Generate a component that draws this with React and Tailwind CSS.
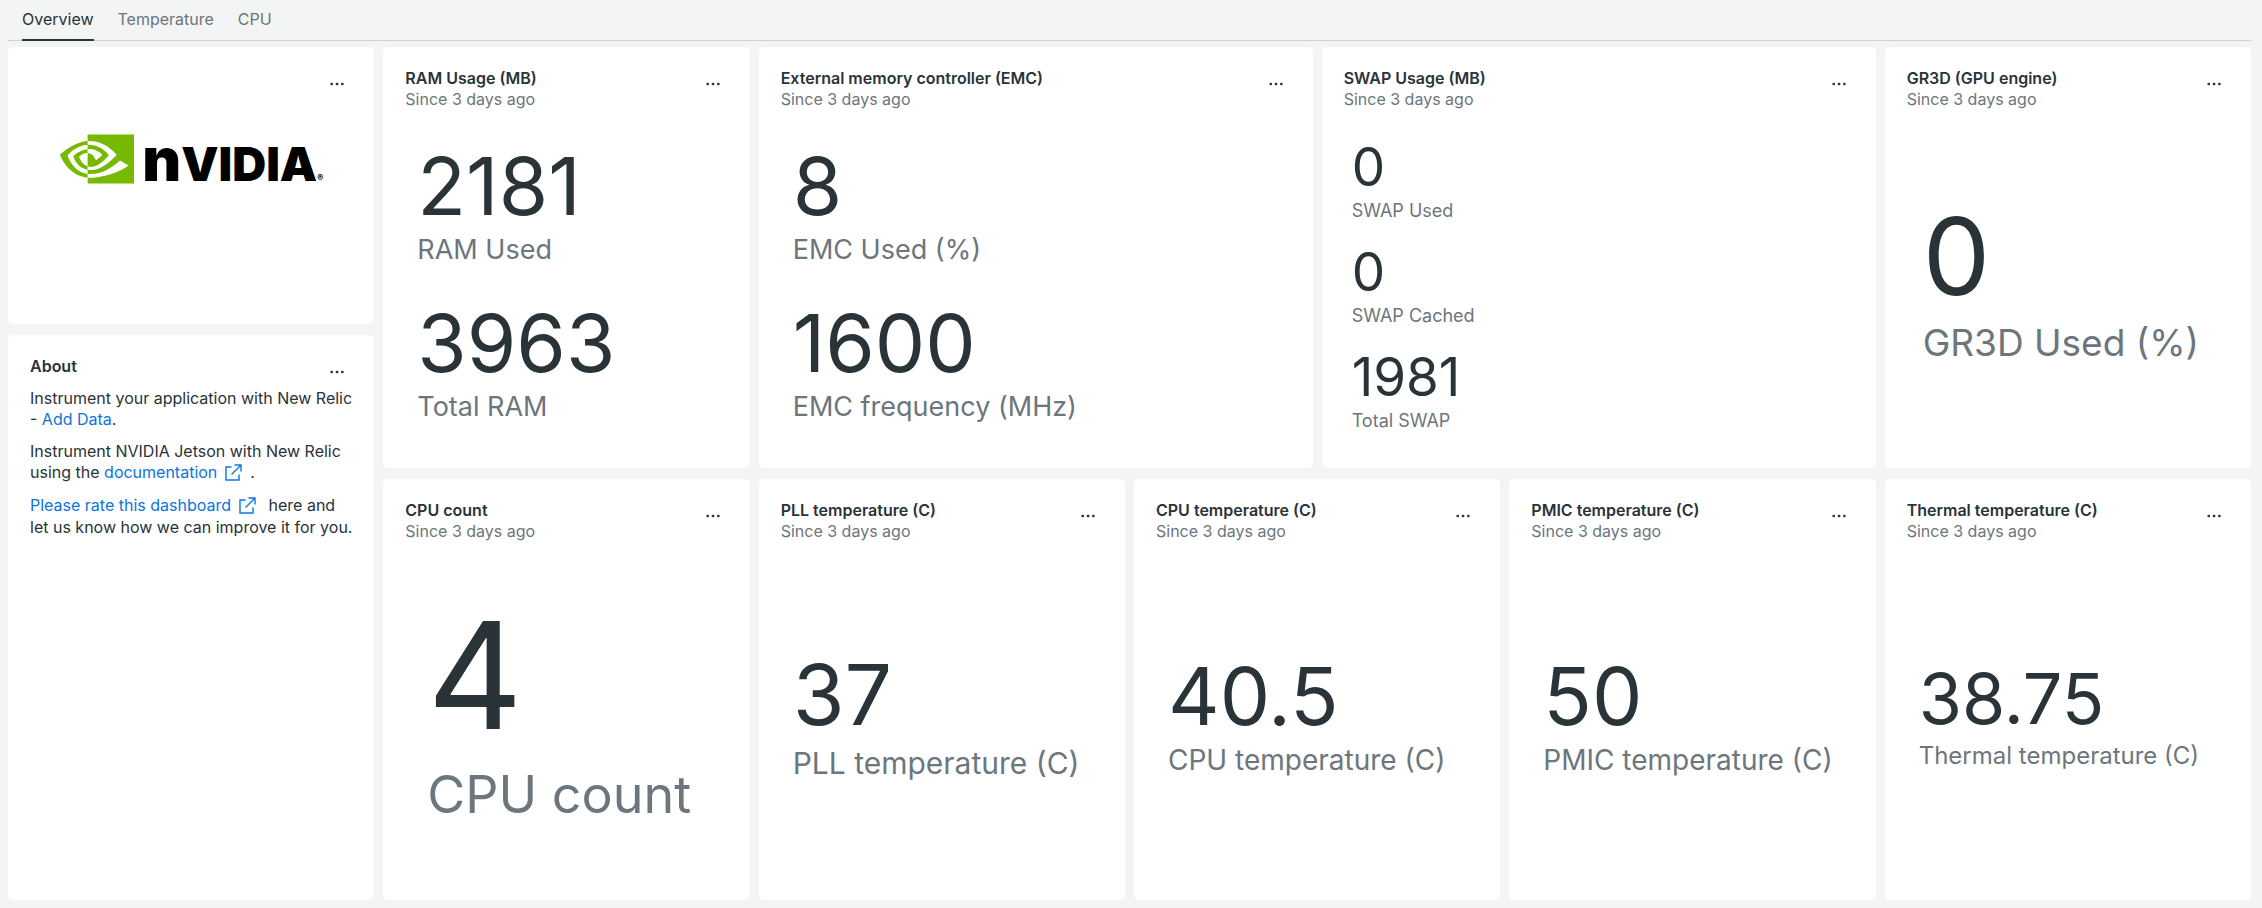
import { SiNvidia } from "react-icons/si";

const tabs = ["Overview", "Temperature", "CPU"];

const sizes = {
  xs: { wrap: "pl-2", value: "text-[53px]", label: "text-[18px] leading-[33px]" },
  sm: { wrap: "pl-3", value: "text-[70px]", label: "text-[24px] leading-[43px]" },
  md: { wrap: "pl-3", value: "text-[80px]", label: "text-[27px] leading-[48px]" },
  lg: { wrap: "pl-3", value: "text-[80px]", label: "text-[28px] leading-[49px]" },
  xl: { wrap: "pl-3", value: "text-[84px]", label: "text-[30px] leading-[52px]" },
  "2xl": { wrap: "pl-4", value: "text-[107px]", label: "text-[37px] leading-[65px]" },
  "3xl": { wrap: "pl-[22px]", value: "text-[148px]", label: "text-[52px] leading-[90px]" },
};

const widgets = [
  {
    title: "RAM Usage (MB)",
    size: "md",
    span: "col-span-2",
    metrics: [["2181", "RAM Used"], ["3963", "Total RAM"]],
  },
  {
    title: "External memory controller (EMC)",
    size: "md",
    span: "col-span-3",
    metrics: [["8", "EMC Used (%)"], ["1600", "EMC frequency (MHz)"]],
  },
  {
    title: "SWAP Usage (MB)",
    size: "xs",
    span: "col-span-3",
    metrics: [["0", "SWAP Used"], ["0", "SWAP Cached"], ["1981", "Total SWAP"]],
  },
  { title: "GR3D (GPU engine)", size: "2xl", span: "col-span-2", metrics: [["0", "GR3D Used (%)"]] },
  { title: "CPU count", size: "3xl", span: "col-span-2", metrics: [["4", "CPU count"]] },
  { title: "PLL temperature (C)", size: "xl", span: "col-span-2", metrics: [["37", "PLL temperature (C)"]] },
  { title: "CPU temperature (C)", size: "lg", span: "col-span-2", metrics: [["40.5", "CPU temperature (C)"]] },
  { title: "PMIC temperature (C)", size: "lg", span: "col-span-2", metrics: [["50", "PMIC temperature (C)"]] },
  { title: "Thermal temperature (C)", size: "sm", span: "col-span-2", metrics: [["38.75", "Thermal temperature (C)"]] },
];

function MoreButton() {
  return (
    <button type="button" aria-label="More options" className="mt-2 flex h-4 w-8 shrink-0 items-center justify-center">
      <svg viewBox="0 0 16 4" className="h-1 w-4" fill="currentColor">
        <rect x="1.5" y="0.8" width="2.5" height="2.5" rx="0.8" />
        <rect x="6.8" y="0.8" width="2.5" height="2.5" rx="0.8" />
        <rect x="12.1" y="0.8" width="2.5" height="2.5" rx="0.8" />
      </svg>
    </button>
  );
}

function Card({ title, subtitle, className, children }) {
  return (
    <section className={`flex flex-col rounded-[5px] bg-white pt-[21px] pr-[21px] pb-[22px] pl-[22px] ${className}`}>
      <header className="flex justify-between">
        <div>
          {title && <h2 className="font-semibold">{title}</h2>}
          {subtitle && <p className="text-[#6c767c]">{subtitle}</p>}
        </div>
        <MoreButton />
      </header>
      {children}
    </section>
  );
}

function Widget({ title, size, span, metrics }) {
  const s = sizes[size];
  return (
    <Card title={title} subtitle="Since 3 days ago" className={span}>
      <div className={`flex flex-1 flex-col pt-[21px] ${s.wrap}`}>
        {metrics.map(([value, label]) => (
          <div key={label} className="flex flex-1 flex-col justify-center whitespace-nowrap">
            <div className={`leading-none ${s.value}`}>{value}</div>
            <div className={`text-[#6c767c] ${s.label}`}>{label}</div>
          </div>
        ))}
      </div>
    </Card>
  );
}

function ExternalIcon() {
  return (
    <svg viewBox="0 0 17 17" className="ml-2 inline-block h-[17px] w-[17px] align-[-3px]" fill="none" stroke="currentColor" strokeWidth="1.4">
      <path d="M6.5 3H1v13h13V10.5" />
      <path d="M9.5 1H16V7.5M16 1L6.5 10.5" />
    </svg>
  );
}

function Logo() {
  return (
    <div className="flex items-center justify-center pt-[30px] text-black" role="img" aria-label="NVIDIA">
      <SiNvidia className="h-[74px] w-[74px] text-[#76b900]" />
      <div className="flex items-baseline pl-2 font-black leading-none">
        <span className="text-[60px]">n</span>
        <span className="text-[47px]">VIDIA</span>
        <span className="text-[9px]">®</span>
      </div>
    </div>
  );
}

export default function App() {
  return (
    <div className="flex min-h-screen flex-col bg-[#f3f4f4] pr-[11px] pb-2 pl-2 font-['Inter',sans-serif] text-base leading-[21px] text-[#293338] [font-optical-sizing:none]">
      <nav className="flex gap-6 border-b border-[#cdd1d2] px-[14px]">
        {tabs.map((tab, i) => (
          <button
            key={tab}
            type="button"
            className={i === 0 ? "-mb-px border-b-2 border-[#293338] py-[9px]" : "pt-[9px] pb-[10px] text-[#6c767c]"}
          >
            {tab}
          </button>
        ))}
      </nav>

      <main className="mt-1.5 grid flex-1 grid-cols-6 gap-x-[9px]">
        <div className="grid grid-rows-6 gap-y-[11px]">
          <Card className="row-span-2">
            <Logo />
          </Card>
          <Card title="About" className="row-span-4">
            <div className="space-y-[11px] pt-2">
              <p>
                Instrument your application with New Relic -{" "}
                <a href="#data" className="text-[#0c74df]">Add Data</a>.
              </p>
              <p>
                Instrument NVIDIA Jetson with New Relic using the{" "}
                <a href="#docs" className="text-[#0c74df]">documentation<ExternalIcon /></a>
                <span className="pl-2">.</span>
              </p>
              <p className="leading-[22px]">
                <a href="#rate" className="text-[#0c74df]">Please rate this dashboard<ExternalIcon /></a>
                <span className="pl-2"> here and let us know how we can improve it for you.</span>
              </p>
            </div>
          </Card>
        </div>
        <div className="col-span-5 grid grid-cols-10 grid-rows-2 gap-x-[9px] gap-y-[11px]">
          {widgets.map((w) => (
            <Widget key={w.title} {...w} />
          ))}
        </div>
      </main>
    </div>
  );
}
